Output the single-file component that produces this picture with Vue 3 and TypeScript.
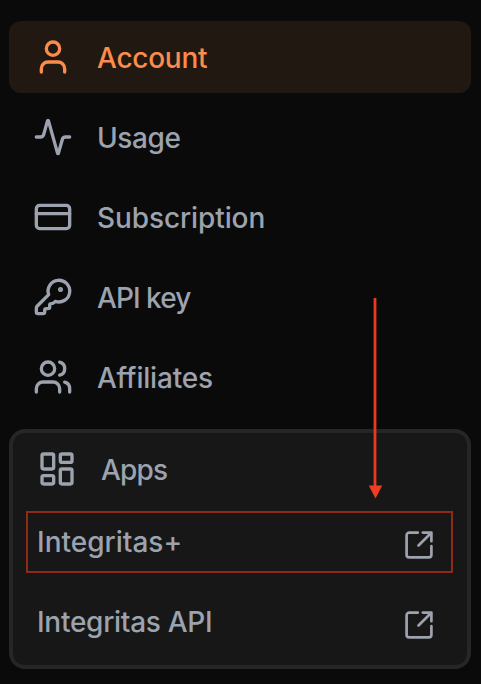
<script setup lang="ts">
interface NavItem {
  id: string
  label: string
  paths: string[]
}

const items: NavItem[] = [
  { id: 'account', label: 'Account', paths: ['M19 21v-2a4 4 0 0 0-4-4H9a4 4 0 0 0-4 4v2', 'M16 7a4 4 0 1 1-8 0a4 4 0 0 1 8 0z'] },
  { id: 'usage', label: 'Usage', paths: ['M22 12h-2.48a2 2 0 0 0-1.93 1.46l-2.35 8.36a.25.25 0 0 1-.48 0L9.24 2.18a.25.25 0 0 0-.48 0l-2.35 8.36A2 2 0 0 1 4.49 12H2'] },
  { id: 'subscription', label: 'Subscription', paths: ['M4 5h16a2 2 0 0 1 2 2v10a2 2 0 0 1-2 2H4a2 2 0 0 1-2-2V7a2 2 0 0 1 2-2z', 'M2 10h20'] },
  { id: 'key', label: 'API key', paths: ['M2.586 17.414A2 2 0 0 0 2 18.828V21a1 1 0 0 0 1 1h3a1 1 0 0 0 1-1v-1a1 1 0 0 1 1-1h1a1 1 0 0 0 1-1v-1a1 1 0 0 1 1-1h.172a2 2 0 0 0 1.414-.586l.814-.814a6.5 6.5 0 1 0-4-4z', 'M17 7.5a.5.5 0 1 1-1 0a.5.5 0 0 1 1 0z'] },
  { id: 'affiliates', label: 'Affiliates', paths: ['M16 21v-2a4 4 0 0 0-4-4H6a4 4 0 0 0-4 4v2', 'M13 7a4 4 0 1 1-8 0a4 4 0 0 1 8 0z', 'M22 21v-2a4 4 0 0 0-3-3.87', 'M16 3.13a4 4 0 0 1 0 7.75'] },
]

const apps = [
  { id: 'plus', label: 'Integritas+' },
  { id: 'api', label: 'Integritas API' },
]
</script>

<template>
  <div class="sidebar">
    <nav class="menu">
      <a v-for="item in items" :key="item.id" class="item" :class="[item.id, { active: item.id === 'account' }]">
        <svg class="icon" viewBox="0 0 24 24"><path v-for="d in item.paths" :key="d" :d="d" /></svg>
        <span class="label">{{ item.label }}</span>
      </a>
    </nav>
    <section class="panel">
      <div class="heading">
        <svg class="icon" viewBox="0 0 24 24">
          <rect x="3" y="3" width="7" height="9" rx="1" />
          <rect x="14" y="3" width="7" height="5" rx="1" />
          <rect x="14" y="12" width="7" height="9" rx="1" />
          <rect x="3" y="16" width="7" height="5" rx="1" />
        </svg>
        <span class="label">Apps</span>
      </div>
      <a v-for="app in apps" :key="app.id" class="app" :class="app.id">
        <span class="label">{{ app.label }}</span>
        <svg class="external" viewBox="0 0 28 28">
          <path d="M12.800 1.600H4.200a2.600 2.600 0 0 0-2.600 2.600v19.600a2.600 2.600 0 0 0 2.600 2.600h19.600a2.600 2.600 0 0 0 2.600-2.600V15.200M17.800 1.600h8.600v8.600M25.800 2.200L13.500 14.500" />
        </svg>
      </a>
    </section>
    <svg class="arrow" viewBox="0 0 14 202">
      <path class="shaft" d="M6 1v190" />
      <path class="head" d="M-0.200 188.500h13.400L6.500 201.500z" />
    </svg>
  </div>
</template>

<style>
body {
  background: #0a0a0a;
}
</style>

<style scoped>
.sidebar {
  position: relative;
  box-sizing: border-box;
  width: 481px;
  height: 684px;
  padding: 21px 10px 15px 9px;
  background: #0a0a0a;
  color: #9ca3af;
  font: 500 28px/40px Inter, sans-serif;
}
.menu {
  display: flex;
  flex-direction: column;
  gap: 8px;
}
.item {
  display: flex;
  align-items: center;
  gap: 24px;
  height: 72px;
  box-sizing: border-box;
  padding: 0 24px;
  border-radius: 12px;
}
.active {
  background: #211812;
  color: #fb8c4b;
}
.icon {
  width: 40px;
  height: 40px;
  flex: none;
}
svg {
  fill: none;
  stroke: currentColor;
  stroke-width: 2;
  stroke-linecap: round;
  stroke-linejoin: round;
}
.key .icon path:last-child {
  fill: currentColor;
}
.label {
  white-space: nowrap;
}
.item .label,
.heading .label {
  padding-top: 2px;
}
.account .label {
  letter-spacing: -0.25px;
}
.usage .label {
  letter-spacing: -0.4px;
}
.subscription .label {
  letter-spacing: -0.1px;
}
.key .label {
  letter-spacing: -0.95px;
}
.affiliates .label {
  letter-spacing: -0.2px;
}
.heading .label {
  letter-spacing: -0.8px;
}
.api .label {
  letter-spacing: -0.28px;
}
.panel {
  box-sizing: border-box;
  height: 240px;
  margin-top: 16px;
  border: 4px solid #262626;
  border-radius: 16px;
  background: #171717;
  padding: 0 14px 0 13px;
}
.heading {
  display: flex;
  align-items: center;
  gap: 24px;
  height: 72px;
  padding: 0 11px;
}
.app {
  display: flex;
  align-items: center;
  justify-content: space-between;
  box-sizing: border-box;
  height: 62px;
  margin-top: 6px;
  padding: 0 18px 0 9px;
  border: 2px solid transparent;
}
.app.plus {
  border-color: #8f2a18;
}
.app.api {
  margin-top: 18px;
}
.external {
  width: 28px;
  height: 28px;
  margin-top: 6px;
  stroke-width: 2.7;
}
.arrow {
  position: absolute;
  left: 369px;
  top: 297px;
  width: 14px;
  height: 202px;
}
.shaft {
  stroke: #e63b22;
  stroke-width: 2.8;
  stroke-linecap: butt;
}
.head {
  fill: #f03d23;
  stroke: none;
}
</style>
